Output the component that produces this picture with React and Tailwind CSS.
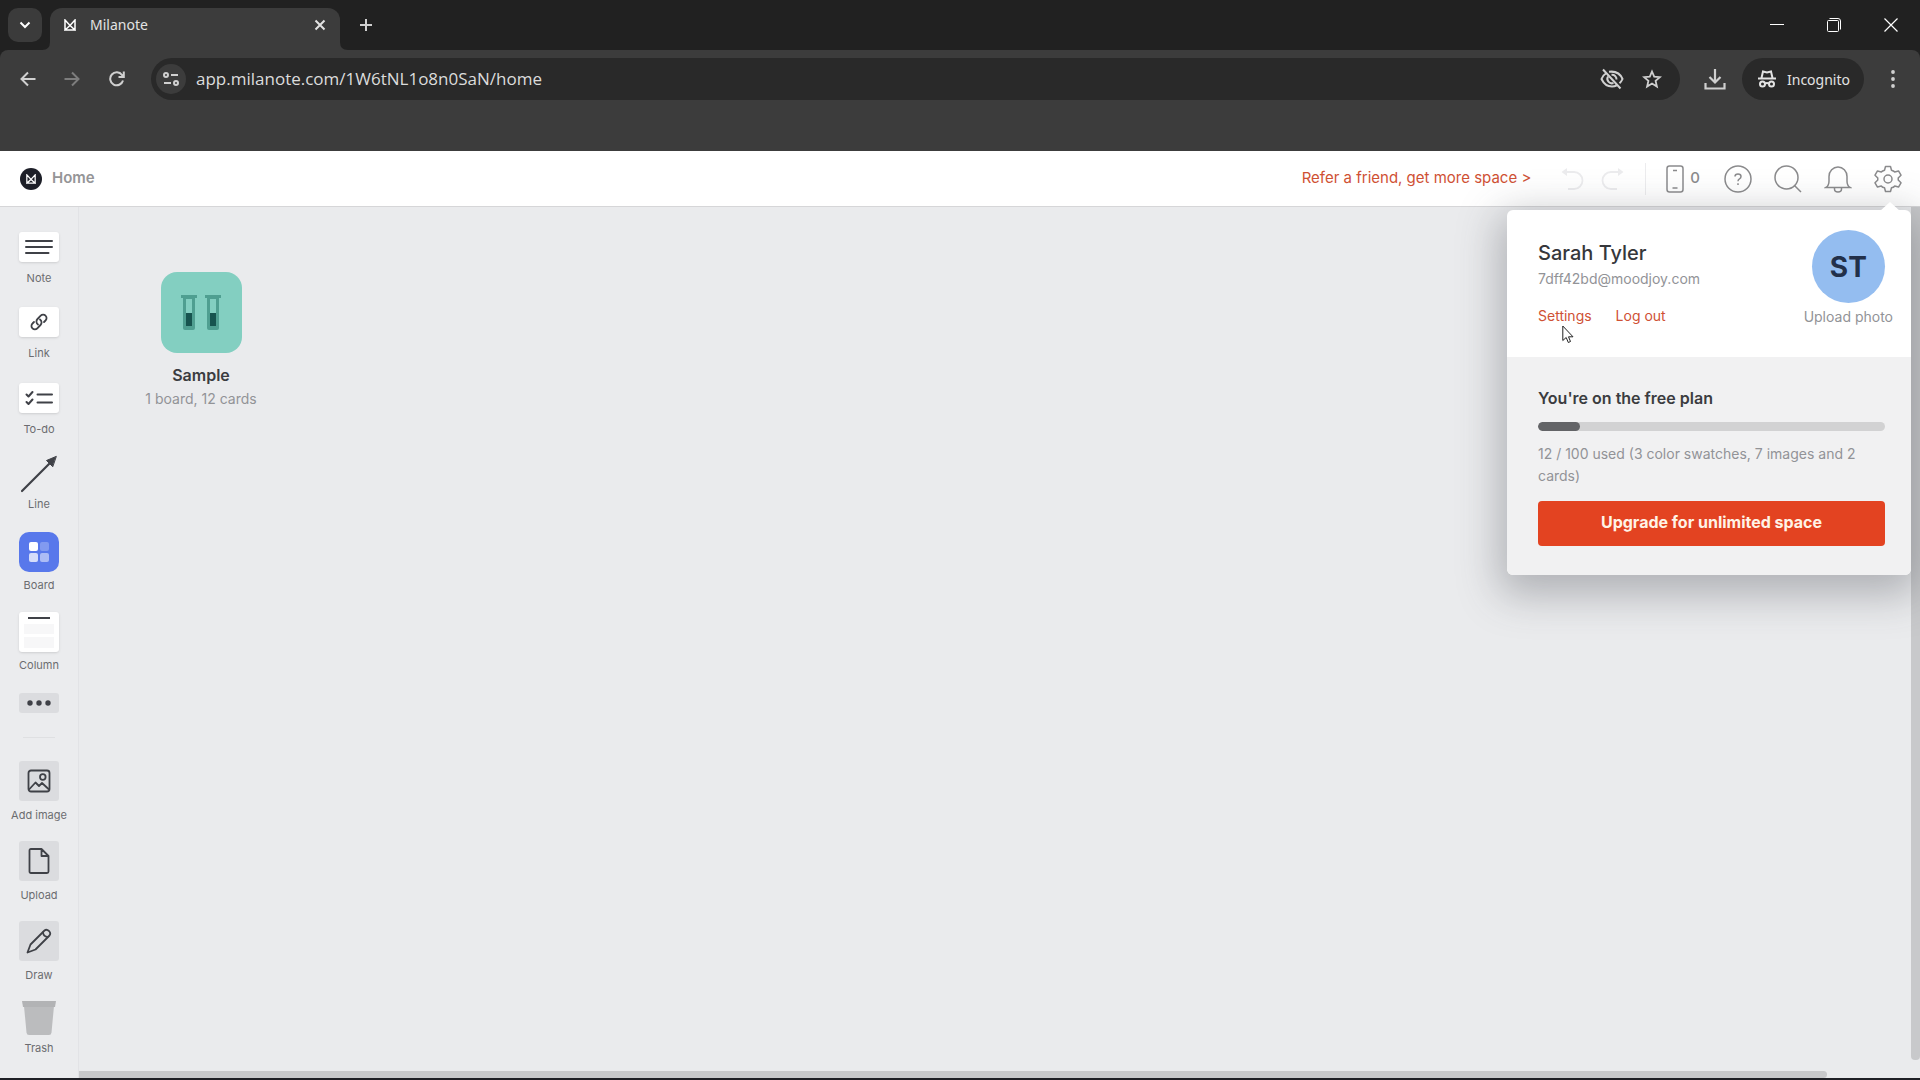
import React from "react";

function MilanoteMark({ className, color = "currentColor" }) {
  return (
    <svg viewBox="0 0 12 12" className={className} fill="none" stroke={color} strokeWidth="1.5" strokeLinejoin="miter">
      <path d="M1 11V1L6 6.5L11 1V11L6 6.5L1 11H11" />
    </svg>
  );
}

function TabStrip() {
  return (
    <div className="flex h-[50px] shrink-0 items-end bg-[#212121] pl-2">
      <button aria-label="Search tabs" className="mb-2 flex size-[34px] items-center justify-center rounded-[10px] bg-[#3b3b3b] text-white">
        <svg viewBox="0 0 12 12" className="size-3" fill="none" stroke="currentColor" strokeWidth="2"><path d="M1.5 3.5L6 8L10.500 3.5" /></svg>
      </button>
      <svg viewBox="0 0 8 8" className="size-2" fill="#3c3c3c"><path d="M8 0V8H0Q8 8 8 0Z" /></svg>
      <div className="flex h-[42px] w-[290px] items-center rounded-t-xl bg-[#3c3c3c] px-[14px] pb-2">
        <MilanoteMark className="size-3 text-white" />
        <span className="ml-[14px] flex-1 text-[14px] leading-5 text-[#e3e3e3]">Milanote</span>
        <button aria-label="Close tab" className="text-[#e3e3e3]">
          <svg viewBox="0 0 12 12" className="size-3" fill="none" stroke="currentColor" strokeWidth="2"><path d="M1.500 1.500L10.500 10.500M10.500 1.500L1.500 10.500" /></svg>
        </button>
      </div>
      <svg viewBox="0 0 8 8" className="size-2" fill="#3c3c3c"><path d="M0 0V8H8Q0 8 0 0Z" /></svg>
      <button aria-label="New tab" className="mb-[18px] ml-[11px] text-[#d0d0d0]">
        <svg viewBox="0 0 14 14" className="size-[14px]" fill="none" stroke="currentColor" strokeWidth="2"><path d="M7 1V13M1 7H13" /></svg>
      </button>
      <div className="mb-[18px] ml-auto flex items-center gap-[43px] pr-[22px] text-white">
        <button aria-label="Minimize"><svg viewBox="0 0 14 14" className="size-[14px]" stroke="currentColor"><path d="M0 6.500H14" /></svg></button>
        <button aria-label="Restore"><svg viewBox="0 0 14 14" className="size-[14px]" fill="none" stroke="currentColor"><path d="M.5 3.500Q.5 2.500 1.500 2.500H10.500Q11.500 2.500 11.500 3.500V12.500Q11.500 13.500 10.500 13.500H1.500Q.5 13.500.5 12.500ZM2.500.5H11Q13.500.5 13.500 3V11.500" /></svg></button>
        <button aria-label="Close"><svg viewBox="0 0 14 14" className="size-[14px]" fill="none" stroke="currentColor" strokeWidth="1.2"><path d="M.5.5L13.500 13.500M13.500.5L.5 13.500" /></svg></button>
      </div>
    </div>
  );
}

function AddressBar() {
  return (
    <div className="h-[101px] shrink-0 rounded-t-lg bg-[#3c3c3c] pt-2">
      <div className="flex items-center pl-5 text-[#d0d0d0]">
        <button aria-label="Back"><svg viewBox="0 0 16 16" className="size-4" fill="none" stroke="currentColor" strokeWidth="2"><path d="M15.500 8H2M8 1.500L1.500 8L8 14.500" /></svg></button>
        <button aria-label="Forward" className="ml-7 text-[#7d7d7d]"><svg viewBox="0 0 16 16" className="size-4" fill="none" stroke="currentColor" strokeWidth="2"><path d="M.5 8H14M8 1.500L14.500 8L8 14.500" /></svg></button>
        <button aria-label="Reload" className="ml-[29px]"><svg viewBox="0 0 16 16" className="size-4" fill="none" stroke="currentColor" strokeWidth="2"><path d="M14 9.500A6.500 6.500 0 1 1 13 4L14.500 5.500M14.800.5V6H9.500" /></svg></button>
        <div className="ml-[26px] flex h-[42px] flex-1 items-center rounded-full bg-[#292929] pr-[18px] pl-[5px]">
          <button aria-label="Site information" className="flex size-[30px] items-center justify-center rounded-full bg-[#3c3c3c]">
            <svg viewBox="0 0 16 16" className="size-4" fill="none" stroke="currentColor" strokeWidth="2"><circle cx="3" cy="4" r="2" /><path d="M8 4H15M1 12H8" /><circle cx="13" cy="12" r="2" /></svg>
          </button>
          <input aria-label="Address" readOnly value="app.milanote.com/1W6tNL1o8n0SaN/home" className="ml-[10px] flex-1 bg-transparent font-['Open_Sans',sans-serif] text-[17px] leading-6 text-[#dcdcdc] outline-none" />
          <button aria-label="Third-party cookies blocked">
            <svg viewBox="0 0 24 22" className="h-[22px] w-6" fill="none" stroke="currentColor" strokeWidth="2"><path d="M6.500 5Q3 7 1.500 11Q5 18.500 12 18.500Q14.500 18.500 16.500 17.500M9 3.800Q19 2.500 22.500 11Q21.500 13.500 19.500 15.200M3 1.500L20.500 20.500" /><path d="M8 8.500A4.500 4.500 0 0 0 13.500 15M11.500 6.800A4.500 4.500 0 0 1 16.500 11.500" /></svg>
          </button>
          <button aria-label="Bookmark this tab" className="ml-[18px]">
            <svg viewBox="0 0 20 20" className="size-5" fill="none" stroke="currentColor" strokeWidth="1.800"><path d="M10 2.500L12.200 7.700L17.900 8.200L13.600 11.900L14.900 17.500L10 14.500L5.100 17.500L6.400 11.900L2.100 8.200L7.800 7.700Z" /></svg>
          </button>
        </div>
        <button aria-label="Downloads" className="ml-6">
          <svg viewBox="0 0 22 22" className="size-[22px]" fill="none" stroke="currentColor" strokeWidth="2.200"><path d="M11 1V14M5.500 9L11 14.500L16.500 9M1.500 15V20.500H20.500V15" /></svg>
        </button>
        <div className="ml-4 flex h-[42px] items-center gap-[11px] rounded-full bg-[#292929] pr-[14px] pl-4 text-[14px] text-[#e3e3e3]">
          <svg viewBox="0 0 18 18" className="size-[18px]" fill="none" stroke="currentColor" strokeWidth="2"><path d="M0 8.500H18M3.500 8L5 1.500L9 2.500L13 1.500L14.500 8" /><circle cx="4.500" cy="14" r="2.500" /><circle cx="13.500" cy="14" r="2.500" /><path d="M7 13.500Q9 12.500 11 13.500" /></svg>
          <span>Incognito</span>
        </div>
        <button aria-label="Browser menu" className="mr-[25px] ml-[27px]">
          <svg viewBox="0 0 4 18" className="h-[18px] w-1" fill="currentColor"><circle cx="2" cy="2" r="1.900" /><circle cx="2" cy="9" r="1.900" /><circle cx="2" cy="16" r="1.900" /></svg>
        </button>
      </div>
    </div>
  );
}

function AppHeader() {
  const icon = "size-7 fill-none stroke-[#8b8b8d] stroke-[1.5]";
  return (
    <header className="relative z-10 flex h-14 shrink-0 items-center border-b border-[#d6d6d8] bg-white pr-[18px] pl-5">
      <a href="#home" className="flex items-center gap-[10px] text-[15px] font-semibold text-[#959597]">
        <span className="flex size-[22px] items-center justify-center rounded-full bg-[#1d1f28]"><MilanoteMark className="size-[10px]" color="white" /></span>
        Home
      </a>
      <a href="#refer" className="mr-[29px] ml-auto text-[15px] text-[#cf5134]">Refer a friend, get more space &gt;</a>
      <button aria-label="Undo" className="mr-[17px]"><svg viewBox="0 0 24 24" className="size-6" fill="none" stroke="#ececee" strokeWidth="1.800"><path d="M4 5H14A8.500 8.500 0 0 1 14 22H8" /><path d="M7 1V9L1.500 5Z" fill="#ececee" stroke="none" /></svg></button>
      <button aria-label="Redo"><svg viewBox="0 0 24 24" className="size-6" fill="none" stroke="#ececee" strokeWidth="1.800"><path d="M20 5H10A8.500 8.500 0 0 0 10 22H16" /><path d="M17 1V9L22.500 5Z" fill="#ececee" stroke="none" /></svg></button>
      <span className="ml-5 h-8 w-px bg-[#ececee]" />
      <button className="ml-5 flex items-center gap-1.5 text-[15px] font-medium text-[#8b8b8d]" aria-label="Unsorted notes 0">
        <svg viewBox="0 0 18 28" className="h-7 w-[18px] fill-none stroke-[#8b8b8d] stroke-[1.5]"><rect x="1" y="1" width="16" height="26" rx="2.500" /><path d="M7 5.500H11M6.500 23H11.500" /></svg>
        0
      </button>
      <button aria-label="Help" className="ml-6"><svg viewBox="0 0 28 28" className={icon}><circle cx="14" cy="14" r="13" /><path d="M11 11.500Q11 9 14 9Q17 9 17 11.500Q17 13 15.500 13.800Q14 14.600 14 16.300M14 18.300V20" /></svg></button>
      <button aria-label="Search" className="ml-[22px]"><svg viewBox="0 0 28 28" className={icon}><circle cx="12.500" cy="12.500" r="11.500" /><path d="M20.500 20.500L27 27" /></svg></button>
      <button aria-label="Notifications" className="ml-[22px]"><svg viewBox="0 0 28 28" className={icon}><path d="M2 22.500C4.500 21 5 19 5 16V11.500A9 9.500 0 0 1 23 11.500V16C23 19 23.500 21 26 22.500ZM10.500 23V24Q10.500 27 14 27Q17.500 27 17.500 24V23" /></svg></button>
      <button aria-label="Account settings" className="ml-[22px]"><svg viewBox="0 0 28 28" className={icon}><circle cx="14" cy="14" r="4" /><path d="M11.500 1.500H16.500L17.500 5.200Q19.500 5.800 20.700 6.900L24.500 5.900L27 10.200L24.200 13Q24.400 14 24.200 15L27 17.800L24.500 22.100L20.700 21.100Q19.500 22.300 17.500 22.800L16.500 26.500H11.500L10.500 22.800Q8.500 22.300 7.300 21.100L3.500 22.100L1 17.800L3.800 15Q3.600 14 3.800 13L1 10.200L3.500 5.900L7.300 6.900Q8.500 5.800 10.500 5.200Z" strokeLinejoin="round" /></svg></button>
    </header>
  );
}

const card = "flex w-10 items-center justify-center rounded-[3px]";
const stroke = { fill: "none", stroke: "#3f4147", strokeLinecap: "round", strokeLinejoin: "round" };

function Tool({ label, children, className }) {
  return (
    <button className={`flex w-full flex-col items-center text-[11px] leading-4 text-[#6b6c70] ${className}`}>
      {children}
      <span>{label}</span>
    </button>
  );
}

function Sidebar() {
  const white = `${card} mb-2 h-[30px] bg-white shadow-sm`;
  const grey = `${card} mb-1.5 h-10 bg-[#dbdcdf]`;
  return (
    <nav aria-label="Tools" className="flex w-[79px] shrink-0 flex-col items-center border-r border-[#e2e3e6] bg-[#ebecee] pt-[25px]">
      <Tool label="Note" className="mb-[21px]">
        <span className={white}><svg viewBox="0 0 28 16" className="h-4 w-7" {...stroke} strokeWidth="2"><path d="M1 2H27M1 8H27M1 14H23.500" /></svg></span>
      </Tool>
      <Tool label="Link" className="mb-[22px]">
        <span className={white}><svg viewBox="0 0 18 18" className="size-[18px]" {...stroke} strokeWidth="1.800"><path d="M8 11.500C6 10 6 7.500 7.500 6L10.700 2.700C12 1.300 14.200 1.300 15.500 2.700C16.900 4 16.900 6.200 15.500 7.500L14 9M10 6.500C12 8 12 10.500 10.500 12L7.300 15.300C6 16.700 3.800 16.700 2.500 15.300C1.100 14 1.100 11.800 2.500 10.500L4 9" /></svg></span>
      </Tool>
      <Tool label="To-do" className="mb-[18px]">
        <span className={white}><svg viewBox="0 0 28 16" className="h-4 w-7" {...stroke} strokeWidth="2"><path d="M1.500 4.500L3.500 6.500L7.500 2M1.500 12L3.500 14L7.500 9.500M12.500 4.500H27M12.500 12.500H27" /></svg></span>
      </Tool>
      <Tool label="Line" className="mb-5">
        <svg viewBox="0 0 38 38" className="mb-[3px] size-[38px]" {...stroke} strokeWidth="2.200"><path d="M2 36L31 7" /><path d="M36 1.500L26.500 5.500L32.500 11.500Z" fill="#3f4147" strokeWidth="1" /></svg>
      </Tool>
      <Tool label="Board" className="mb-[19px]">
        <span className="mb-[5px] flex size-10 items-center justify-center rounded-[10px] bg-[#5878eb]">
          <svg viewBox="0 0 22 22" className="size-[22px]" fill="white"><rect x="1" y="1" width="9" height="9" rx="2" /><rect x="12" y="1" width="9" height="9" rx="2" opacity=".25" /><rect x="1" y="12" width="9" height="9" rx="2" opacity=".75" /><rect x="12" y="12" width="9" height="9" rx="2" opacity=".5" /></svg>
        </span>
      </Tool>
      <Tool label="Column" className="mb-5">
        <span className={`${card} mb-[5px] h-10 bg-white shadow-sm`}>
          <svg viewBox="0 0 40 40" className="size-10"><path d="M9 6H31" stroke="#3f4147" strokeWidth="2" /><rect x="5" y="12" width="30" height="10" fill="#f7f7f8" /><rect x="5" y="25" width="30" height="11" fill="#f7f7f8" /></svg>
        </span>
      </Tool>
      <button aria-label="More tools" className={`${card} h-5 bg-[#dbdcdf]`}>
        <svg viewBox="0 0 24 6" className="h-1.5 w-6" fill="#3f4147"><circle cx="3" cy="3" r="2.700" /><circle cx="12" cy="3" r="2.700" /><circle cx="21" cy="3" r="2.700" /></svg>
      </button>
      <hr className="mt-6 mb-[23px] w-8 border-[#dfe0e2]" />
      <Tool label="Add image" className="mb-[18px]">
        <span className={grey}><svg viewBox="0 0 24 24" className="size-6" {...stroke} strokeWidth="1.800"><rect x="1.500" y="1.500" width="21" height="21" rx="2.500" /><circle cx="15.800" cy="8" r="2.800" /><path d="M2.500 20L8.500 13.500L12 17L15 14L21.500 20" /></svg></span>
      </Tool>
      <Tool label="Upload" className="mb-[18px]">
        <span className={grey}><svg viewBox="0 0 22 26" className="h-[26px] w-[22px]" {...stroke} strokeWidth="1.800"><path d="M3 1H13.500L20.500 8V23.500Q20.500 25 19 25H3Q1.500 25 1.500 23.500V2.500Q1.500 1 3 1ZM13.500 1V8H20.500" /></svg></span>
      </Tool>
      <Tool label="Draw" className="mb-[17px]">
        <span className={grey}><svg viewBox="0 0 26 26" className="size-[26px]" {...stroke} strokeWidth="1.800"><path d="M1.500 24.500L4.500 16.500L18.500 2.500Q20.500.8 23 3Q25.200 5.300 23.500 7.500L9.500 21.500Z" /><path d="M17 4.500Q17.500 8.500 21.500 9" /></svg></span>
      </Tool>
      <Tool label="Trash" className="">
        <svg viewBox="0 0 36 36" className="mb-1 size-9"><path d="M3 6H33L30.500 32.500Q30.200 35 28 35H8Q5.800 35 5.500 32.500Z" fill="#bbbcbe" /><path d="M1 1H35L34 7H2Z" fill="#b2b3b5" /></svg>
      </Tool>
    </nav>
  );
}

function Tube({ x }) {
  return (
    <g transform={`translate(${x} 0)`}>
      <path d="M2 3V33Q2 35 4 35H12Q14 35 14 33V3Z" fill="#4f9f91" />
      <path d="M5 4H11V18H5Z" fill="#83cfc1" />
      <path d="M5 18H11V31H5Z" fill="#17544f" />
      <path d="M0 0H16V3H0Z" fill="#4f9f91" />
    </g>
  );
}

function AccountMenu() {
  return (
    <section aria-label="Account" className="absolute top-[3px] right-[9px] z-20 w-[404px] rounded-md bg-white shadow-[0_12px_40px_8px_rgba(70,72,80,0.35)]">
      <svg viewBox="0 0 20 9" className="absolute -top-2 right-[11px] h-[9px] w-5" fill="white"><path d="M0 9L10 0L20 9Z" /></svg>
      <div className="flex h-[147px] justify-between pt-5 pr-[18px] pl-[31px]">
        <div className="pt-[9px]">
          <h2 className="text-[20px] leading-7 font-medium text-[#36373b]">Sarah Tyler</h2>
          <p className="text-[14px] leading-6 text-[#929397]">7dff42bd@moodjoy.com</p>
          <div className="mt-[15px] flex gap-6 text-[14px] leading-5 text-[#cf5134]">
            <a href="#settings">Settings</a>
            <a href="#logout">Log out</a>
          </div>
        </div>
        <div className="flex flex-col items-center">
          <span className="flex size-[73px] items-center justify-center rounded-full bg-[#94bdf0] text-[28px] font-bold text-[#22304a]">ST</span>
          <button className="mt-1 text-[14px] leading-5 text-[#929397]">Upload photo</button>
        </div>
      </div>
      <div className="rounded-b-md bg-[#f1f1f2] px-[31px] pt-[30px] pr-[26px] pb-[29px]">
        <h3 className="text-[16px] leading-[22px] font-semibold text-[#3b3c40]">You're on the free plan</h3>
        <div className="mt-[13px] h-[9px] overflow-hidden rounded-full bg-[#d2d2d3]"><div className="h-full w-[12%] rounded-full bg-[#636467]" /></div>
        <p className="mt-3 text-[14px] leading-[22px] text-[#929397]">12 / 100 used (3 color swatches, 7 images and 2 cards)</p>
        <button className="mt-[14px] h-[45px] w-full rounded-[4px] bg-[#e34321] pb-1 text-[16px] font-bold text-[#fff3e6]">Upgrade for unlimited space</button>
      </div>
    </section>
  );
}

export default function App() {
  return (
    <div className="flex h-screen flex-col overflow-hidden bg-[#1f2026] font-['Inter',sans-serif]">
      <div className="shrink-0 bg-[#212121] font-['Noto_Sans','Open_Sans',sans-serif]">
        <TabStrip />
        <AddressBar />
      </div>
      <AppHeader />
      <div className="relative mb-0.5 flex min-h-0 flex-1">
        <Sidebar />
        <main className="relative flex min-w-0 flex-1 flex-col justify-between bg-[#eaebed]">
          <a href="#sample" className="ml-[52px] flex w-[140px] flex-col items-center pt-[65px] text-center">
            <span className="flex size-[81px] items-center justify-center rounded-[16px] bg-[#83cfc1]">
              <svg viewBox="0 0 40 36" className="h-9 w-10"><Tube x={0} /><Tube x={24} /></svg>
            </span>
            <span className="mt-[10px] text-[16px] leading-6 font-semibold text-[#3b3c40]">Sample</span>
            <span className="text-[14px] leading-6 text-[#929397]">1 board, 12 cards</span>
          </a>
          <div className="mr-[84px] h-[7px] rounded-r bg-[#c8c9cb]" />
        </main>
        <div className="w-[9px] bg-[#eaebed] pb-[18px]"><div className="h-full rounded-b bg-[#c8c9cb]" /></div>
        <AccountMenu />
        <svg viewBox="0 0 12 19" className="absolute top-[118px] right-[346px] z-30 h-[19px] w-3" fill="white" stroke="#222"><path d="M.8 1V15.500L4.200 12.500L6.300 17.500L8.500 16.500L6.500 11.800H11Z" /></svg>
      </div>
    </div>
  );
}
